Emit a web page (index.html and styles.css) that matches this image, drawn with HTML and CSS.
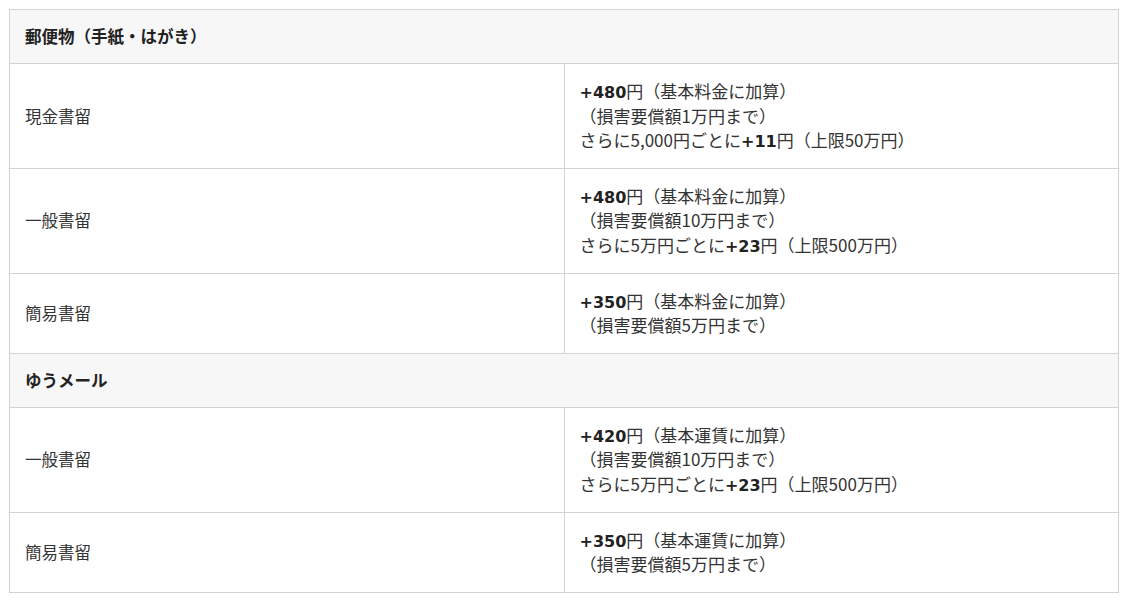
FILE: index.html
```html
<!DOCTYPE html>
<html lang="ja">
<head>
<meta charset="utf-8">
<link rel="stylesheet" href="styles.css">
</head>
<body>
<table class="rates">
  <tr class="group"><th colspan="2">郵便物（手紙・はがき）</th></tr>
  <tr>
    <td class="name">現金書留</td>
    <td class="fee"><span class="num">+480</span>円（基本料金に加算）<br>（損害要償額1万円まで）<br>さらに5,000円ごとに<span class="num">+11</span>円（上限50万円）</td>
  </tr>
  <tr>
    <td class="name">一般書留</td>
    <td class="fee"><span class="num">+480</span>円（基本料金に加算）<br>（損害要償額10万円まで）<br>さらに5万円ごとに<span class="num">+23</span>円（上限500万円）</td>
  </tr>
  <tr>
    <td class="name">簡易書留</td>
    <td class="fee"><span class="num">+350</span>円（基本料金に加算）<br>（損害要償額5万円まで）</td>
  </tr>
  <tr class="group"><th colspan="2">ゆうメール</th></tr>
  <tr>
    <td class="name">一般書留</td>
    <td class="fee"><span class="num">+420</span>円（基本運賃に加算）<br>（損害要償額10万円まで）<br>さらに5万円ごとに<span class="num">+23</span>円（上限500万円）</td>
  </tr>
  <tr>
    <td class="name">簡易書留</td>
    <td class="fee"><span class="num">+350</span>円（基本運賃に加算）<br>（損害要償額5万円まで）</td>
  </tr>
</table>
</body>
</html>
```

FILE: styles.css
```css
html, body {
  margin: 0;
  padding: 0;
  background: #ffffff;
}
body {
  padding: 9px 0 0 9px;
  font-family: "Noto Sans CJK JP", "Noto Sans", sans-serif;
  color: #333333;
}
.rates {
  width: 1110px;
  border-collapse: collapse;
  table-layout: fixed;
}
.rates th,
.rates td {
  border: 1px solid #d3d3d3;
  padding: 15px 15px;
  text-align: left;
  vertical-align: middle;
  font-weight: 400;
  line-height: 24.6px;
}
.group th {
  background: #f7f7f7;
  font-weight: 700;
  font-size: 16.5px;
  line-height: 23px;
  color: #222222;
}
.name {
  width: 50%;
  font-size: 16.5px;
}
.fee {
  font-size: 17px;
}
.fee .num {
  font-family: "DejaVu Sans", "Noto Sans", sans-serif;
  font-weight: 700;
  font-size: 16px;
  line-height: 1;
  color: #222222;
}
```
